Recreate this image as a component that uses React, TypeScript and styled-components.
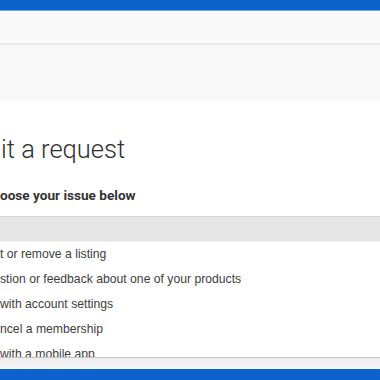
import React from 'react';
import styled, { createGlobalStyle } from 'styled-components';

const GlobalStyle = createGlobalStyle`
  html, body {
    margin: 0;
    padding: 0;
    background: #ffffff;
  }
  body {
    width: 380px;
    height: 380px;
    overflow: hidden;
  }
`;

const PageDiv = styled.div`
  width: 380px;
  height: 380px;
  display: flex;
  flex-direction: column;
  overflow: hidden;
  background: #ffffff;
`;

const TopBar = styled.div`
  height: 10px;
  flex: none;
  background: #0b63cc;
  border-bottom: 1px solid #79a6e2;
`;

const HeaderBand = styled.div`
  height: 32px;
  flex: none;
  background: #f9f9f9;
  border-bottom: 2px solid #e9e9e9;
`;

const SubnavBand = styled.div`
  height: 56px;
  flex: none;
  background: #f8f8f8;
`;

const MainDiv = styled.main`
  flex: 1;
  display: flex;
  flex-direction: column;
  padding-top: 32px;
  min-height: 0;
`;

const TitleH1 = styled.h1`
  margin: 0;
  padding-left: 1px;
  font-family: Roboto, 'Liberation Sans', sans-serif;
  font-weight: 300;
  font-size: 25.5px;
  line-height: 32px;
  color: #2f2f2f;
`;

const PromptP = styled.p`
  margin: 21px 0 12px;
  font-family: Roboto, 'Liberation Sans', sans-serif;
  font-weight: 700;
  font-size: 13.6px;
  line-height: 18px;
  color: #333333;
`;

const ListboxDiv = styled.div`
  display: flex;
  flex-direction: column;
  border-top: 1px solid #d5d5d5;
`;

const SearchRow = styled.div`
  height: 24px;
  background: #e6e6e6;
  border-bottom: 1px solid #f1f1f1;
`;

const OptionsUl = styled.ul`
  list-style: none;
  margin: 0;
  padding: 0;
  height: 115px;
  overflow: hidden;
  border-bottom: 1px solid #c4c4c4;
`;

const OptionLi = styled.li`
  height: 25px;
  line-height: 25px;
  padding-left: 0;
  font-family: 'Liberation Sans', Arial, sans-serif;
  font-size: 12.2px;
  color: #3d3d3d;
  white-space: nowrap;
`;

const FooterStrip = styled.div`
  height: 11px;
  flex: none;
  background: linear-gradient(#ededed, #f6f6f6);
`;

const BottomBar = styled.div`
  height: 11px;
  flex: none;
  background: #0c63cd;
`;

const options = [
  't or remove a listing',
  'stion or feedback about one of your products',
  'with account settings',
  'ncel a membership',
  'with a mobile app',
];

const App = () => {
  return (
    <PageDiv>
      <GlobalStyle />
      <TopBar />
      <HeaderBand />
      <SubnavBand />
      <MainDiv>
        <TitleH1>it a request</TitleH1>
        <PromptP>oose your issue below</PromptP>
        <ListboxDiv>
          <SearchRow />
          <OptionsUl>
            {options.map((o) => (
              <OptionLi key={o}>{o}</OptionLi>
            ))}
          </OptionsUl>
        </ListboxDiv>
      </MainDiv>
      <FooterStrip />
      <BottomBar />
    </PageDiv>
  );
};

export default App;
